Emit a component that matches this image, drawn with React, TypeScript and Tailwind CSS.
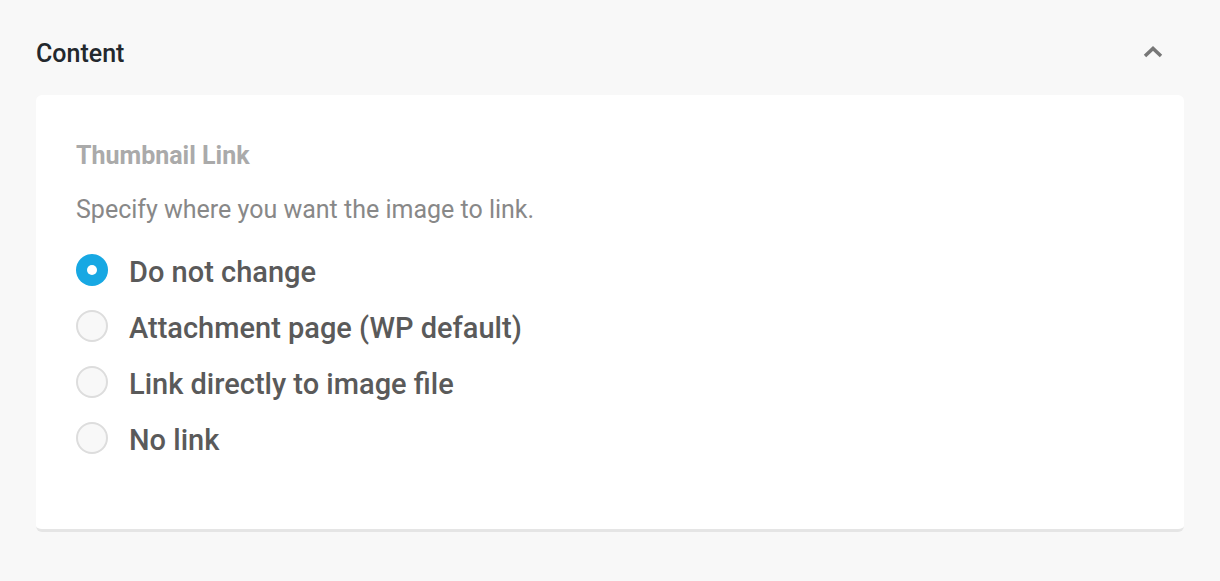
import { useState } from "react";

const options = [
  "Do not change",
  "Attachment page (WP default)",
  "Link directly to image file",
  "No link",
];

export default function App() {
  const [selected, setSelected] = useState(0);

  return (
    <div className="min-h-screen bg-[#f8f8f8] px-9 pt-[38px] font-['Roboto',sans-serif]">
      {/* Section header */}
      <div className="flex items-center justify-between pr-[20px]">
        <h2 className="text-[25px] leading-[32px] font-medium text-[#23282d]">Content</h2>
        <svg width="22" height="14" viewBox="0 0 22 14" className="mt-[-4px]">
          <path d="M3 11 L11 3.5 L19 11" fill="none" stroke="#777" strokeWidth="3.5" />
        </svg>
      </div>

      {/* Card */}
      <div className="mt-[25px] rounded-md bg-white border-b-[3px] border-[#e5e5e5] px-10 pt-[46px] pb-[71px]">
        <h3 className="text-[25px] leading-[30px] font-bold text-[#aaaaaa]">Thumbnail Link</h3>
        <p className="mt-[24px] text-[25px] leading-[30px] text-[#888888]">
          Specify where you want the image to link.
        </p>

        <div className="mt-[29px] flex flex-col gap-[20px]">
          {options.map((label, i) => (
            <label
              key={label}
              className="flex items-center gap-[21px] cursor-pointer"
              onClick={() => setSelected(i)}
            >
              {selected === i ? (
                <span className="flex h-[32px] w-[32px] -mt-[4px] items-center justify-center rounded-full bg-[#17a8e3]">
                  <span className="h-[10px] w-[10px] rounded-full bg-white" />
                </span>
              ) : (
                <span className="h-[32px] w-[32px] -mt-[4px] rounded-full border-2 border-[#dddddd] bg-[#f8f8f8]" />
              )}
              <span className="text-[29px] leading-[36px] font-medium text-[#5a5a5a]">{label}</span>
            </label>
          ))}
        </div>
      </div>
    </div>
  );
}
